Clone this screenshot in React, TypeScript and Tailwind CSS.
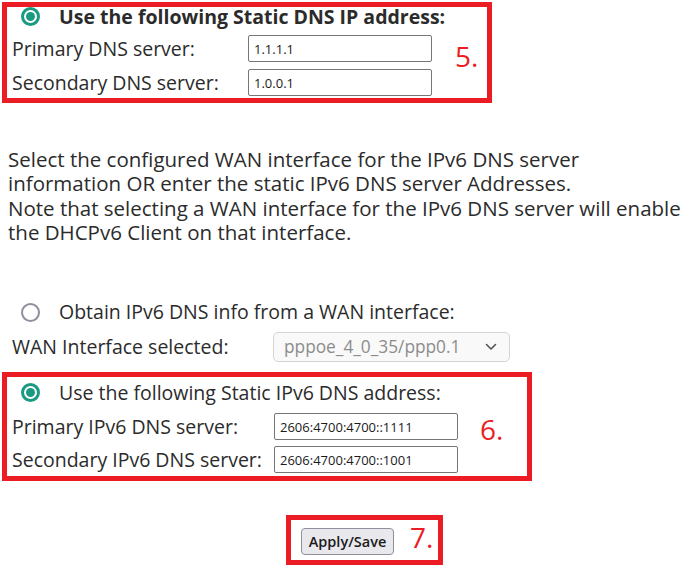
import React from "react";

function Radio({ checked }: { checked?: boolean }) {
  if (checked) {
    return (
      <span className="w-[19px] h-[19px] rounded-full border-[3px] border-[#1a9a80] flex items-center justify-center shrink-0 bg-white">
        <span className="block w-[9px] h-[9px] rounded-full bg-[#1a9a80]" />
      </span>
    );
  }
  return <span className="block w-[19px] h-[19px] rounded-full border-[2.5px] border-[#8f8f9d] shrink-0 bg-white" />;
}

function TextInput({ value, w }: { value: string; w: string }) {
  return (
    <div className={`${w} h-[27px] border border-[#767676] rounded-[2px] bg-white flex items-center pl-[5px] text-[13px] text-[#1b1b1b]`}>
      {value}
    </div>
  );
}

export default function App() {
  return (
    <div className="w-[698px] h-[584px] bg-white pl-[2px] pt-[2px] font-['Open_Sans',sans-serif] text-[19.5px] text-[#2b2b2b] leading-[24px]">
      {/* Box 5 */}
      <div className="w-[490px] h-[101px] border-[5px] border-[#ec1c24] pl-[5px]">
        <div className="h-[19px] flex items-center font-bold">
          <span className="ml-[9px] mr-[19px]">
            <Radio checked />
          </span>
          <span className="whitespace-nowrap">Use the following Static DNS IP address:</span>
        </div>
        <div className="flex mt-[9px]">
          <div className="flex flex-col gap-[7px]">
            <div className="flex items-center h-[27px]">
              <span className="w-[236px] whitespace-nowrap">Primary DNS server:</span>
              <TextInput value="1.1.1.1" w="w-[184px]" />
            </div>
            <div className="flex items-center h-[27px]">
              <span className="w-[236px] whitespace-nowrap">Secondary DNS server:</span>
              <TextInput value="1.0.0.1" w="w-[184px]" />
            </div>
          </div>
          <span className="ml-[23px] mt-[7px] text-[28px] leading-[28px] text-[#ec1c24]">5.</span>
        </div>
      </div>

      {/* Paragraph */}
      <div className="mt-[44px] pl-[6px] text-[20.5px] leading-[24.3px] whitespace-nowrap">
        Select the configured WAN interface for the IPv6 DNS server
        <br />
        information OR enter the static IPv6 DNS server Addresses.
        <br />
        Note that selecting a WAN interface for the IPv6 DNS server will enable
        <br />
        the DHCPv6 Client on that interface.
      </div>

      {/* Obtain radio */}
      <div className="mt-[58px] h-[20px] flex items-center">
        <span className="ml-[19px] mr-[19px]">
          <Radio />
        </span>
        <span className="whitespace-nowrap">Obtain IPv6 DNS info from a WAN interface:</span>
      </div>
      <div className="mt-[10px] h-[30px] flex items-center pl-[10px]">
        <span className="w-[261px] whitespace-nowrap">WAN Interface selected:</span>
        <div className="w-[237px] h-[30px] rounded-[5px] border border-[#d5d5d5] bg-[#f9f9f9] flex items-center justify-between pl-[10px] pr-[12px]">
          <span className="text-[17.3px] text-[#8c8c8c] whitespace-nowrap">pppoe_4_0_35/ppp0.1</span>
          <svg width="12" height="8" viewBox="0 0 12 8" fill="none">
            <path d="M1.5 1.5 L6 6 L10.5 1.5" stroke="#555" strokeWidth="1.6" strokeLinecap="round" strokeLinejoin="round" />
          </svg>
        </div>
      </div>

      {/* Box 6 */}
      <div className="mt-[10px] w-[530px] h-[109px] border-[5px] border-[#ec1c24] pl-[5px] pt-[6px]">
        <div className="h-[19px] flex items-center">
          <span className="ml-[9px] mr-[19px]">
            <Radio checked />
          </span>
          <span className="whitespace-nowrap">Use the following Static IPv6 DNS address:</span>
        </div>
        <div className="flex mt-[11px]">
          <div className="flex flex-col gap-[6px]">
            <div className="flex items-center h-[27px]">
              <span className="w-[262px] whitespace-nowrap">Primary IPv6 DNS server:</span>
              <TextInput value="2606:4700:4700::1111" w="w-[184px]" />
            </div>
            <div className="flex items-center h-[27px]">
              <span className="w-[262px] whitespace-nowrap">Secondary IPv6 DNS server:</span>
              <TextInput value="2606:4700:4700::1001" w="w-[184px]" />
            </div>
          </div>
          <span className="ml-[22px] mt-[2px] text-[28px] leading-[28px] text-[#ec1c24]">6.</span>
        </div>
      </div>

      {/* Box 7 */}
      <div className="mt-[34px] ml-[284px] w-[157px] h-[50px] border-[5px] border-[#ec1c24] flex pl-[10px] pt-[3px]">
        <div className="mt-[5px] w-[93px] h-[27px] rounded-[4px] border border-[#8f8f9d] bg-[#e9e9ed] flex items-center justify-center text-[14.5px] font-semibold text-[#1b1b1b] whitespace-nowrap">
          Apply/Save
        </div>
        <span className="ml-[16px] mt-[0px] text-[28px] leading-[28px] text-[#ec1c24]">7.</span>
      </div>
    </div>
  );
}
